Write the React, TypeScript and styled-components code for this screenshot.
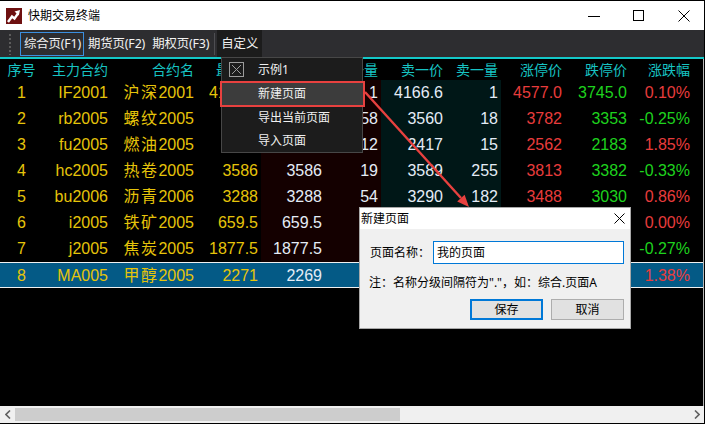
import React from 'react';
import styled, { createGlobalStyle } from 'styled-components';

const UI = `"Noto Sans", "Noto Sans CJK SC", sans-serif`;
const NUM = `"Liberation Sans", "Noto Sans CJK SC", sans-serif`;
const COLS = '43px 68px 86px 64px 64px 56px 65px 55px 64px 65px 63px 1fr';

const YELLOW = '#e6c40a';
const WHITE = '#e4ecf6';
const RED = '#e83c3c';
const GREEN = '#1ed21e';
const CYAN = '#17c3c3';

const GlobalStyle = createGlobalStyle`
  html, body { margin: 0; padding: 0; background: #fff; }
  body { font-family: ${UI}; }
  * { box-sizing: border-box; }
`;

const Window = styled.div`
  position: relative;
  width: 705px;
  height: 424px;
  border-top: 1px solid #000;
  border-right: 1px solid #000;
  border-bottom: 1px solid #000;
  display: flex;
  flex-direction: column;
  overflow: hidden;
  background: #000;
`;

const TitleBar = styled.div`
  height: 29px;
  flex: none;
  background: #fff;
  display: flex;
  align-items: center;
  padding-left: 6px;
`;

const TitleText = styled.span`
  margin-left: 6px;
  font: 12px/16px ${UI};
  color: #000;
  flex: 1;
`;

const Controls = styled.div`
  display: flex;
  height: 100%;
`;

const ControlButton = styled.div`
  width: 44px;
  height: 100%;
  display: flex;
  align-items: center;
  justify-content: center;
`;

const Toolbar = styled.div`
  height: 29px;
  flex: none;
  background: #2d2d30;
  border-bottom: 2px solid #14c8c8;
  display: flex;
  align-items: flex-start;
  padding-left: 8px;
`;

const Grip = styled.div`
  width: 4px;
  height: 22px;
  margin: 3px 8px 0 0;
  background-image: radial-gradient(circle, #5c5c5c 0.9px, transparent 1.1px);
  background-size: 4px 4px;
`;

const Tab = styled.div<{ $active?: boolean }>`
  height: 24px;
  margin-top: 2px;
  padding: 0 2px 0 3px;
  border: 1px solid ${p => (p.$active ? '#3b8fe0' : 'transparent')};
  font: 12.4px/22px ${UI};
  letter-spacing: -0.15px;
  color: #f2f2f2;
  white-space: nowrap;
`;

const ToolSep = styled.div`
  width: 1px;
  height: 22px;
  margin: 3px 2px 0 2px;
  background: #4e4e52;
`;

const MenuTab = styled.div`
  height: 27px;
  padding: 0 4px;
  background: #1c1c1c;
  font: 12.4px/27px ${UI};
  color: #f2f2f2;
  white-space: nowrap;
`;

const TableArea = styled.div`
  flex: 1;
  background: #000;
  border-right: 1px solid #b8b8b8;
  display: flex;
  flex-direction: column;
`;

const HeaderRow = styled.div`
  display: grid;
  grid-template-columns: ${COLS};
  height: 21px;
  font: 14px/21px ${UI};
  color: ${CYAN};
`;

const HeadCell = styled.div<{ $center?: boolean }>`
  text-align: ${p => (p.$center ? 'center' : 'right')};
  padding-right: ${p => (p.$center ? 0 : 3)}px;
  white-space: nowrap;
`;

const DataRow = styled.div<{ $selected?: boolean }>`
  display: grid;
  grid-template-columns: ${COLS};
  height: 26px;
  background: ${p => (p.$selected ? '#045a86' : 'transparent')};
  border-top: ${p => (p.$selected ? '1px solid #f0f0f0' : 'none')};
  border-bottom: ${p => (p.$selected ? '1px solid #f0f0f0' : 'none')};
  font: 16px/26px ${NUM};
`;

const DataCell = styled.div<{ $color: string; $zone?: 'buy' | 'sell'; $center?: boolean }>`
  color: ${p => p.$color};
  background: ${p => (p.$zone === 'buy' ? '#140000' : p.$zone === 'sell' ? '#001717' : 'transparent')};
  text-align: ${p => (p.$center ? 'center' : 'right')};
  padding-right: ${p => (p.$center ? 0 : 3)}px;
  padding-top: 1px;
  white-space: nowrap;
  line-height: 24px;
`;

const CjkPart = styled.span`
  letter-spacing: 1.5px;
`;

const Scrollbar = styled.div`
  height: 17px;
  flex: none;
  background: #f0f0f0;
  display: flex;
  align-items: center;
`;

const ScrollArrow = styled.div`
  width: 15px;
  height: 17px;
  display: flex;
  align-items: center;
  justify-content: center;
`;

const Thumb = styled.div`
  width: 385px;
  height: 13px;
  background: #cdcdcd;
`;

const Spacer = styled.div`
  flex: 1;
`;

const Menu = styled.div`
  position: absolute;
  left: 221px;
  top: 56px;
  width: 142px;
  height: 96px;
  background: #1c1c1c;
  border: 1px solid #474747;
  padding-top: 1px;
  display: flex;
  flex-direction: column;
`;

const MenuItem = styled.div<{ $marked?: boolean }>`
  height: ${p => (p.$marked ? 25 : 23)}px;
  display: flex;
  align-items: center;
  font: 12px/16px ${UI};
  color: #f0f0f0;
  background: ${p => (p.$marked ? '#3c3c3c' : 'transparent')};
  outline: ${p => (p.$marked ? '2px solid #e8413f' : 'none')};
  outline-offset: -1px;
  margin-right: ${p => (p.$marked ? -2 : 0)}px;
  margin-left: ${p => (p.$marked ? -1 : 0)}px;
  padding-left: ${p => (p.$marked ? 37 : 36)}px;
  position: relative;
`;

const CheckBox = styled.div`
  position: absolute;
  left: 7px;
  top: 3px;
  width: 15px;
  height: 15px;
  border: 1px solid #9c9c9c;
  display: flex;
  align-items: center;
  justify-content: center;
`;

const ArrowSvg = styled.svg`
  position: absolute;
  left: 360px;
  top: 84px;
  pointer-events: none;
`;

const Dialog = styled.div`
  position: absolute;
  left: 359px;
  top: 206px;
  width: 272px;
  height: 122px;
  border: 1px solid #a8a8a8;
  display: flex;
  flex-direction: column;
  background: #f0f0f0;
`;

const DialogTitle = styled.div`
  height: 21px;
  background: #fff;
  display: flex;
  align-items: center;
  justify-content: space-between;
  padding: 0 5px 0 1px;
  font: 12px/16px ${UI};
  color: #000;
`;

const DialogBody = styled.div`
  flex: 1;
  padding: 12px 6px 0 10px;
  display: flex;
  flex-direction: column;
  font: 12px/16px ${UI};
  color: #000;
`;

const FieldRow = styled.div`
  display: flex;
  align-items: center;
  height: 23px;
`;

const Label = styled.div`
  width: 63px;
`;

const TextBox = styled.div`
  flex: 1;
  height: 23px;
  border: 1px solid #0078d7;
  background: #fff;
  padding-left: 3px;
  line-height: 21px;
`;

const Note = styled.div`
  margin-top: 11px;
  margin-left: -1px;
  white-space: nowrap;
`;

const ButtonRow = styled.div`
  display: flex;
  justify-content: flex-end;
  gap: 8px;
  margin-top: 8px;
`;

const DlgButton = styled.div<{ $primary?: boolean }>`
  width: 73px;
  height: 21px;
  background: #e1e1e1;
  border: ${p => (p.$primary ? '2px solid #0078d7' : '1px solid #adadad')};
  display: flex;
  align-items: center;
  justify-content: center;
  font: 12px/16px ${UI};
`;

type Row = {
  code: string;
  name: string;
  month: string;
  last: string;
  bid: string;
  bidv: string;
  ask: string;
  askv: string;
  up: string;
  down: string;
  chg: string;
};

const rows: Row[] = [
  { code: 'IF2001', name: '沪深', month: '2001', last: '4166.6', bid: '4166.0', bidv: '1', ask: '4166.6', askv: '1', up: '4577.0', down: '3745.0', chg: '0.10%' },
  { code: 'rb2005', name: '螺纹', month: '2005', last: '3559', bid: '3559', bidv: '58', ask: '3560', askv: '18', up: '3782', down: '3353', chg: '-0.25%' },
  { code: 'fu2005', name: '燃油', month: '2005', last: '2416', bid: '2416', bidv: '12', ask: '2417', askv: '15', up: '2562', down: '2183', chg: '1.85%' },
  { code: 'hc2005', name: '热卷', month: '2005', last: '3586', bid: '3586', bidv: '19', ask: '3589', askv: '255', up: '3813', down: '3382', chg: '-0.33%' },
  { code: 'bu2006', name: '沥青', month: '2006', last: '3288', bid: '3288', bidv: '54', ask: '3290', askv: '182', up: '3488', down: '3030', chg: '0.86%' },
  { code: 'i2005', name: '铁矿', month: '2005', last: '659.5', bid: '659.5', bidv: '86', ask: '660.0', askv: '120', up: '705.5', down: '613.5', chg: '0.00%' },
  { code: 'j2005', name: '焦炭', month: '2005', last: '1877.5', bid: '1877.5', bidv: '3', ask: '1878.0', askv: '5', up: '2009.0', down: '1751.0', chg: '-0.27%' },
  { code: 'MA005', name: '甲醇', month: '2005', last: '2271', bid: '2269', bidv: '36', ask: '2271', askv: '12', up: '2410', down: '2096', chg: '1.38%' },
];

const headers = ['序号', '主力合约', '合约名', '最新价', '买一价', '买一量', '卖一价', '卖一量', '涨停价', '跌停价', '涨跌幅'];

const AppIcon = () => (
  <svg width="16" height="16" viewBox="0 0 16 16">
    <rect width="16" height="16" fill="#6e1010" />
    <polyline points="2,14 6,8.5 8.5,10.5 12,5.5" fill="none" stroke="#fff" strokeWidth="2.4" strokeLinejoin="miter" />
    <polygon points="8.5,3.5 14,2 12.8,7.6" fill="#fff" />
  </svg>
);

export default function App() {
  return (
    <>
      <GlobalStyle />
      <Window>
        <TitleBar>
          <AppIcon />
          <TitleText>快期交易终端</TitleText>
          <Controls>
            <ControlButton>
              <svg width="12" height="12" viewBox="0 0 12 12">
                <line x1="0" y1="6.5" x2="12" y2="6.5" stroke="#000" strokeWidth="1" />
              </svg>
            </ControlButton>
            <ControlButton>
              <svg width="11" height="11" viewBox="0 0 11 11">
                <rect x="0.5" y="0.5" width="10" height="10" fill="none" stroke="#000" strokeWidth="1" />
              </svg>
            </ControlButton>
            <ControlButton>
              <svg width="12" height="12" viewBox="0 0 12 12" style={{ marginLeft: 4 }}>
                <path d="M0.5 0.5 L11.5 11.5 M11.5 0.5 L0.5 11.5" stroke="#000" strokeWidth="1" />
              </svg>
            </ControlButton>
          </Controls>
        </TitleBar>

        <Toolbar>
          <Grip />
          <Tab $active>综合页(F1)</Tab>
          <Tab>期货页(F2)</Tab>
          <Tab>期权页(F3)</Tab>
          <ToolSep />
          <MenuTab>自定义</MenuTab>
        </Toolbar>

        <TableArea>
          <HeaderRow>
            {headers.map((h, i) => (
              <HeadCell key={h} $center={i === 0}>{h}</HeadCell>
            ))}
          </HeaderRow>
          {rows.map((r, i) => {
            const sel = i === rows.length - 1;
            const chgColor = r.chg.startsWith('-') ? GREEN : RED;
            return (
              <DataRow key={r.code} $selected={sel}>
                <DataCell $color={YELLOW} $center>{i + 1}</DataCell>
                <DataCell $color={YELLOW}>{r.code}</DataCell>
                <DataCell $color={YELLOW}><CjkPart>{r.name}</CjkPart>{r.month}</DataCell>
                <DataCell $color={YELLOW}>{r.last}</DataCell>
                <DataCell $color={WHITE} $zone={sel ? undefined : 'buy'}>{r.bid}</DataCell>
                <DataCell $color={WHITE} $zone={sel ? undefined : 'buy'}>{r.bidv}</DataCell>
                <DataCell $color={WHITE} $zone={sel ? undefined : 'sell'}>{r.ask}</DataCell>
                <DataCell $color={WHITE} $zone={sel ? undefined : 'sell'}>{r.askv}</DataCell>
                <DataCell $color={RED}>{r.up}</DataCell>
                <DataCell $color={GREEN}>{r.down}</DataCell>
                <DataCell $color={chgColor}>{r.chg}</DataCell>
                <div />
              </DataRow>
            );
          })}
        </TableArea>

        <Scrollbar>
          <ScrollArrow>
            <svg width="6" height="9" viewBox="0 0 6 9">
              <polyline points="5,0.5 1,4.5 5,8.5" fill="none" stroke="#606060" strokeWidth="1.6" />
            </svg>
          </ScrollArrow>
          <Thumb />
          <Spacer />
          <ScrollArrow>
            <svg width="6" height="9" viewBox="0 0 6 9">
              <polyline points="1,0.5 5,4.5 1,8.5" fill="none" stroke="#606060" strokeWidth="1.6" />
            </svg>
          </ScrollArrow>
        </Scrollbar>

        <Menu>
          <MenuItem>
            <CheckBox>
              <svg width="11" height="11" viewBox="0 0 11 11">
                <path d="M1 1 L10 10 M10 1 L1 10" stroke="#9c9c9c" strokeWidth="1" />
              </svg>
            </CheckBox>
            示例1
          </MenuItem>
          <MenuItem $marked>新建页面</MenuItem>
          <MenuItem>导出当前页面</MenuItem>
          <MenuItem>导入页面</MenuItem>
        </Menu>

        <ArrowSvg width="115" height="130" viewBox="0 0 115 130">
          <line x1="5" y1="7" x2="101" y2="113" stroke="#e8413f" strokeWidth="2.4" />
          <polygon points="109,122 97.2,116.5 104.6,109.7" fill="#e8413f" />
        </ArrowSvg>

        <Dialog>
          <DialogTitle>
            新建页面
            <svg width="11" height="11" viewBox="0 0 11 11">
              <path d="M0.5 0.5 L10.5 10.5 M10.5 0.5 L0.5 10.5" stroke="#000" strokeWidth="1" />
            </svg>
          </DialogTitle>
          <DialogBody>
            <FieldRow>
              <Label>页面名称：</Label>
              <TextBox>我的页面</TextBox>
            </FieldRow>
            <Note>注：名称分级间隔符为"."，如：综合.页面A</Note>
            <ButtonRow>
              <DlgButton $primary>保存</DlgButton>
              <DlgButton>取消</DlgButton>
            </ButtonRow>
          </DialogBody>
        </Dialog>
      </Window>
    </>
  );
}
